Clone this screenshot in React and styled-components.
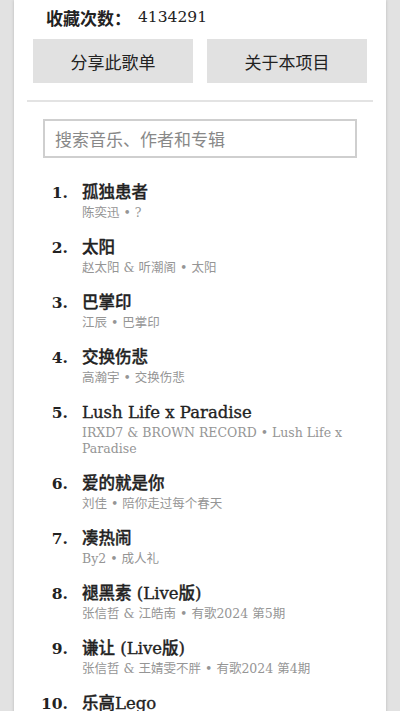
import React from "react";
import styled, { createGlobalStyle } from "styled-components";

const Global = createGlobalStyle`
  html, body { margin: 0; padding: 0; background: #e2e2e2; }
  body { font-family: "DejaVu Serif", "Noto Sans CJK SC", serif; color: #222; }
`;

const Page = styled.div`
  padding: 0 14px;
  min-height: 711px;
`;

const Card = styled.div`
  background: #fff;
  box-shadow: 0 0 3px rgba(0,0,0,0.18);
  padding: 4px 13px 20px;
  min-height: 711px;
  box-sizing: border-box;
`;

const Stat = styled.div`
  display: flex;
  align-items: center;
  gap: 7px;
  padding-left: 19px;
  height: 26px;
  font-size: 17px;
`;

const StatLabel = styled.span`
  font-family: "Noto Sans CJK SC", sans-serif;
  font-weight: 700;
`;

const StatValue = styled.span`
  font-size: 15.5px;
`;

const Buttons = styled.div`
  display: grid;
  grid-template-columns: 1fr 1fr;
  gap: 14px;
  margin: 9px 6px 0;
`;

const Button = styled.button`
  height: 44px;
  border: none;
  background: #e1e1e1;
  color: #222;
  font-family: "Noto Sans CJK SC", sans-serif;
  font-size: 17px;
  padding: 0;
`;

const Divider = styled.hr`
  border: none;
  height: 2px;
  background: #e3e3e3;
  margin: 17px 0 17px;
`;

const Search = styled.input`
  display: block;
  box-sizing: border-box;
  width: 314px;
  height: 39px;
  margin: 0 auto;
  border: 2px solid #cfcfcf;
  padding: 0 10px;
  font-family: "Noto Sans CJK SC", sans-serif;
  font-size: 17px;
  outline: none;
  &::placeholder { color: #888; }
`;

const List = styled.ol`
  list-style: none;
  margin: 23px 0 0;
  padding: 0;
  display: flex;
  flex-direction: column;
  gap: 15px;
`;

const Item = styled.li`
  display: grid;
  grid-template-columns: 41px 1fr;
  column-gap: 14px;
`;

const Num = styled.span`
  text-align: right;
  font-weight: 700;
  font-size: 15.5px;
  line-height: 24px;
`;

const Body = styled.div`
  display: flex;
  flex-direction: column;
  padding-right: 20px;
`;

const Title = styled.span`
  font-size: 16.5px;
  font-weight: 500;
  line-height: 24px;
  -webkit-text-stroke: 0.35px currentColor;
  font-family: "DejaVu Serif", "Noto Sans CJK SC", serif;
`;

const Sub = styled.span`
  font-size: 12.5px;
  line-height: 16px;
  color: #959595;
`;

const songs = [
  ["孤独患者", "陈奕迅 • ?"],
  ["太阳", "赵太阳 & 听潮阁 • 太阳"],
  ["巴掌印", "江辰 • 巴掌印"],
  ["交换伤悲", "高瀚宇 • 交换伤悲"],
  ["Lush Life x Paradise", "IRXD7 & BROWN RECORD • Lush Life x Paradise"],
  ["爱的就是你", "刘佳 • 陪你走过每个春天"],
  ["凑热闹", "By2 • 成人礼"],
  ["褪黑素 (Live版)", "张信哲 & 江皓南 • 有歌2024 第5期"],
  ["谦让 (Live版)", "张信哲 & 王婧雯不胖 • 有歌2024 第4期"],
  ["乐高Lego", "乐高 • Lego"],
];

export default function App() {
  return (
    <>
      <Global />
      <Page>
        <Card>
          <Stat>
            <StatLabel>收藏次数：</StatLabel>
            <StatValue>4134291</StatValue>
          </Stat>
          <Buttons>
            <Button>分享此歌单</Button>
            <Button>关于本项目</Button>
          </Buttons>
          <Divider />
          <Search placeholder="搜索音乐、作者和专辑" />
          <List>
            {songs.map(([t, s], i) => (
              <Item key={i}>
                <Num>{i + 1}.</Num>
                <Body>
                  <Title>{t}</Title>
                  <Sub>{s}</Sub>
                </Body>
              </Item>
            ))}
          </List>
        </Card>
      </Page>
    </>
  );
}
